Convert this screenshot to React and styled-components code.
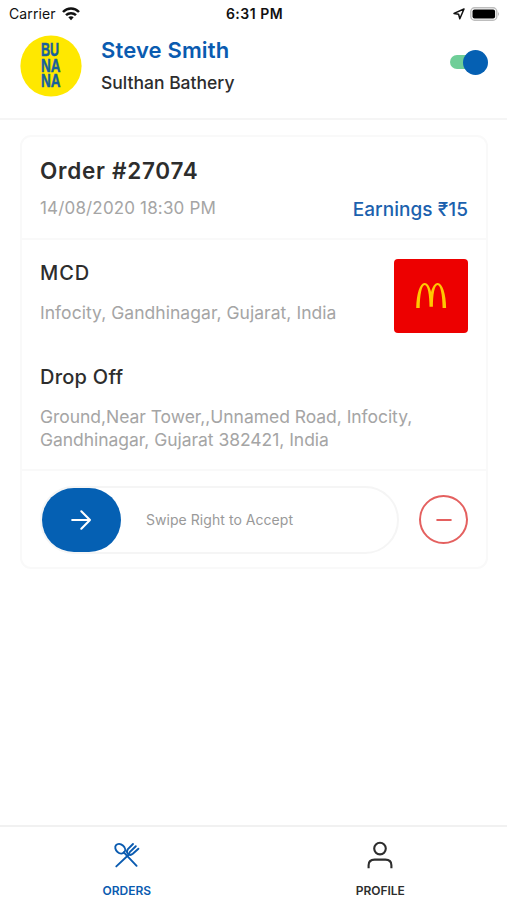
import React, { useState } from 'react'
import styled, { createGlobalStyle } from 'styled-components'

const GlobalStyle = createGlobalStyle`
  * {
    box-sizing: border-box;
  }
  body {
    margin: 0;
    background: #ffffff;
    font-family: Inter, 'Liberation Sans', sans-serif;
    color: #2d2d2d;
  }
  button {
    font-family: inherit;
    padding: 0;
    cursor: pointer;
  }
`

const Screen = styled.div`
  display: flex;
  flex-direction: column;
  height: 900px;
  overflow: hidden;
`

const StatusBar = styled.div`
  display: grid;
  grid-template-columns: 1fr auto 1fr;
  align-items: center;
  height: 27px;
  padding: 0 7px 0 9px;
  color: #111111;
`

const Carrier = styled.div`
  display: flex;
  align-items: center;
  gap: 6px;
  font-size: 14px;
  letter-spacing: 0.1px;
`

const Clock = styled.div`
  font-size: 14px;
  font-weight: 600;
  letter-spacing: 0.5px;
`

const Indicators = styled.div`
  display: flex;
  justify-content: flex-end;
  align-items: center;
  gap: 5px;
`

const Header = styled.header`
  display: flex;
  align-items: flex-start;
  height: 93px;
  padding: 8px 19px 0 20px;
  border-bottom: 2px solid #f5f5f5;
`

const Person = styled.div`
  flex: 1;
  margin-left: 19px;
`

const Name = styled.h1`
  margin: 1px 0 0;
  font-size: 22px;
  line-height: 28px;
  font-weight: 600;
  letter-spacing: 0.15px;
  color: #0a5bb0;
`

const Place = styled.p`
  margin: 7px 0 0;
  font-size: 17.5px;
  line-height: 24px;
  font-weight: 500;
`

const Toggle = styled.button`
  display: flex;
  align-items: center;
  justify-content: ${props => (props.$on ? 'flex-end' : 'flex-start')};
  width: 37px;
  height: 14px;
  margin: 20px 1px 0 0;
  border: 0;
  border-radius: 7px;
  background: ${props => (props.$on ? '#6fce98' : '#cccccc')};
`

const Knob = styled.span`
  flex: none;
  width: 25px;
  height: 25px;
  margin-right: -1px;
  border-radius: 50%;
  background: #0560b3;
`

const Card = styled.section`
  margin: 15px 19px 0 20px;
  border: 2px solid #f9f9f9;
  border-radius: 11px;
`

const Summary = styled.div`
  height: 103px;
  padding: 19px 18px 0;
  border-bottom: 2px solid #f9f9f9;
`

const OrderNumber = styled.h2`
  margin: 0;
  font-size: 22.5px;
  line-height: 30px;
  font-weight: 600;
  letter-spacing: 0.72px;
`

const SummaryRow = styled.div`
  display: flex;
  justify-content: space-between;
  margin-top: 10px;
`

const Placed = styled.span`
  font-size: 17px;
  line-height: 24px;
  letter-spacing: 0.16px;
  color: #a5a5a5;
`

const Earnings = styled.span`
  margin-top: 1px;
  font-size: 19px;
  line-height: 26px;
  font-weight: 500;
  letter-spacing: 0.05px;
  color: #1b61ae;
`

const Stops = styled.div`
  height: 231px;
  padding: 19px 18px 0;
  border-bottom: 2px solid #f9f9f9;
`

const Pickup = styled.div`
  display: flex;
  justify-content: space-between;
  height: 104px;
`

const StopTitle = styled.h3`
  margin: 0;
  font-size: 20px;
  line-height: 28px;
  font-weight: 500;
  letter-spacing: ${props => props.$spacing || '0'};
`

const Address = styled.p`
  margin: 14px 0 0;
  font-size: 17.5px;
  line-height: 23px;
  letter-spacing: ${props => props.$spacing || '0'};
  white-space: pre-line;
  color: #a5a5a5;
`

const Actions = styled.div`
  display: flex;
  align-items: center;
  justify-content: space-between;
  height: 96px;
  padding: 1px 18px 0 18px;
`

const Track = styled.div`
  display: flex;
  align-items: center;
  width: 359px;
  height: 68px;
  border: 2px solid #f5f5f5;
  border-radius: 34px;
`

const Handle = styled.button`
  display: flex;
  align-items: center;
  justify-content: center;
  width: 79px;
  height: 64px;
  border: 0;
  border-radius: 32px;
  background: #0560b3;
`

const Hint = styled.span`
  margin-left: 25px;
  font-size: 14px;
  letter-spacing: 0.05px;
  color: #999999;
`

const Reject = styled.button`
  display: flex;
  align-items: center;
  justify-content: center;
  width: 49px;
  height: 49px;
  border: 2px solid #e4605f;
  border-radius: 50%;
  background: transparent;
`

const TabBar = styled.nav`
  display: flex;
  height: 75px;
  margin-top: auto;
  border-top: 2px solid #f1f1f1;
`

const Tab = styled.button`
  display: flex;
  flex: 1;
  flex-direction: column;
  align-items: center;
  border: 0;
  padding-top: 14px;
  background: transparent;
  color: ${props => (props.$active ? '#0a5bb0' : '#2d2d2d')};
`

const TabLabel = styled.span`
  margin-top: 12px;
  font-size: 12px;
  line-height: 16px;
  font-weight: 600;
`

const WifiIcon = () => (
  <svg width="18" height="14" viewBox="0 0 18 14" fill="none" stroke="#111" strokeWidth="2.5">
    <path d="M1 5C5.5 .4 12.5 .4 17 5" />
    <path d="M4 8.2C6.8 5.5 11.2 5.5 14 8.2" />
    <path d="M6.3 10.3C7.8 9 10.2 9 11.7 10.3L9 13.2Z" fill="#111" stroke="none" />
  </svg>
)

const LocationIcon = () => (
  <svg width="12" height="12" viewBox="0 0 12 12" fill="none" stroke="#111" strokeWidth="1.5" strokeLinejoin="round">
    <path d="M11 1L1 5.4L5.6 6.2L6.8 10.8Z" />
  </svg>
)

const BatteryIcon = () => (
  <svg width="30" height="14" viewBox="0 0 30 14">
    <rect x=".8" y=".8" width="26" height="12.4" rx="3.8" fill="#fff" stroke="#bdbdbd" strokeWidth="1.4" />
    <rect x="2.5" y="2.5" width="22.6" height="9" rx="2" fill="#000" />
    <path d="M28 4.8Q29.8 7 28 9.2Z" fill="#aaa" />
  </svg>
)

const Logo = () => (
  <svg width="62" height="62" viewBox="0 0 62 62">
    <circle cx="31" cy="31" r="30.6" fill="#ffe800" />
    <g
      fill="#17609b"
      stroke="#17609b"
      strokeWidth=".5"
      fontFamily="'Liberation Sans', sans-serif"
      fontWeight="700"
      fontSize="18"
    >
      <text x="21" y="21.4" textLength="18" lengthAdjust="spacingAndGlyphs">BU</text>
      <text x="21" y="36.8" textLength="19.5" lengthAdjust="spacingAndGlyphs">NA</text>
      <text x="21" y="52.4" textLength="19.5" lengthAdjust="spacingAndGlyphs">NA</text>
    </g>
  </svg>
)

const RestaurantLogo = () => (
  <svg width="74" height="74" viewBox="0 0 74 74">
    <rect width="74" height="74" rx="4" fill="#ed0000" />
    <path
      d="M22.2 49C22.5 35 25.8 24 30.6 24C34 24 36 28.5 37.1 33C38.2 28.5 40.5 24 43.7 24C48.5 24 52 35 52.1 49H48.6C48.5 36 46.5 26 43.6 26C40.5 26 38.9 36 38.9 47.8H35.5C35.5 36 33.8 26 30.7 26C27.8 26 25.8 36 25.7 49Z"
      fill="#ffc800"
    />
  </svg>
)

const ArrowIcon = () => (
  <svg width="22" height="22" viewBox="0 0 22 22" fill="none" stroke="#fff" strokeWidth="2.1" strokeLinecap="round" strokeLinejoin="round">
    <path d="M1.2 11H19M10.3 2.3L19 11L10.3 19.7" />
  </svg>
)

const MinusIcon = () => (
  <svg width="16" height="4" viewBox="0 0 16 4" stroke="#e4605f" strokeWidth="2" strokeLinecap="round">
    <path d="M1.2 2H14.8" />
  </svg>
)

const CutleryIcon = () => (
  <svg width="28" height="30" viewBox="0 0 28 30" fill="none" stroke="currentColor" strokeWidth="1.9" strokeLinecap="round" strokeLinejoin="round">
    <ellipse cx="7.2" cy="7.7" rx="5.4" ry="4.2" transform="rotate(40 7.2 7.7)" />
    <path d="M10.8 11.3L23.6 24.8" />
    <path d="M3.3 25.4L16.5 13" />
    <path d="M20 3L14.9 8.2Q12.9 10.7 14.9 12.8Q17.2 15 19.8 12.8L25.4 7.7" />
    <path d="M22.8 5.2L16.5 11.4" />
  </svg>
)

const ProfileIcon = () => (
  <svg width="28" height="30" viewBox="0 0 28 30" fill="none" stroke="currentColor" strokeWidth="2.1">
    <circle cx="14" cy="7.6" r="5.8" />
    <path d="M2.6 27.3V24.2Q2.6 18.6 8.6 18.6H19.4Q25.4 18.6 25.4 24.2V27.3" />
  </svg>
)

export default function App() {
  const [online, setOnline] = useState(true)
  const [tab, setTab] = useState('orders')

  return (
    <Screen>
      <GlobalStyle />
      <StatusBar>
        <Carrier>Carrier <WifiIcon /></Carrier>
        <Clock>6:31 PM</Clock>
        <Indicators>
          <LocationIcon />
          <BatteryIcon />
        </Indicators>
      </StatusBar>

      <Header>
        <Logo />
        <Person>
          <Name>Steve Smith</Name>
          <Place>Sulthan Bathery</Place>
        </Person>
        <Toggle $on={online} onClick={() => setOnline(!online)}>
          <Knob />
        </Toggle>
      </Header>

      <Card>
        <Summary>
          <OrderNumber>Order #27074</OrderNumber>
          <SummaryRow>
            <Placed>14/08/2020 18:30 PM</Placed>
            <Earnings>Earnings ₹15</Earnings>
          </SummaryRow>
        </Summary>
        <Stops>
          <Pickup>
            <div>
              <StopTitle $spacing="0.9px">MCD</StopTitle>
              <Address $spacing="0.04px">Infocity, Gandhinagar, Gujarat, India</Address>
            </div>
            <RestaurantLogo />
          </Pickup>
          <StopTitle $spacing="0.25px">Drop Off</StopTitle>
          <Address $spacing="-0.04px">
            {'Ground,Near Tower,,Unnamed Road, Infocity,\nGandhinagar, Gujarat 382421, India'}
          </Address>
        </Stops>
        <Actions>
          <Track>
            <Handle><ArrowIcon /></Handle>
            <Hint>Swipe Right to Accept</Hint>
          </Track>
          <Reject><MinusIcon /></Reject>
        </Actions>
      </Card>

      <TabBar>
        <Tab $active={tab === 'orders'} onClick={() => setTab('orders')}>
          <CutleryIcon />
          <TabLabel>ORDERS</TabLabel>
        </Tab>
        <Tab onClick={() => setTab('profile')}>
          <ProfileIcon />
          <TabLabel>PROFILE</TabLabel>
        </Tab>
      </TabBar>
    </Screen>
  )
}
